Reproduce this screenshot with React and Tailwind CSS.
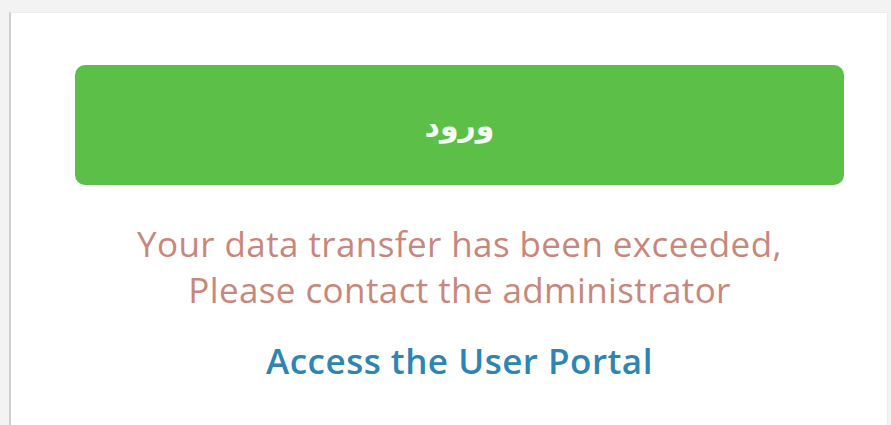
import React from 'react';

const LoginStatus = () => {
  return (
    <div className="min-h-screen bg-[#f3f3f3] pt-[12px] pl-[9px] pr-[3px] overflow-hidden">
      <div className="bg-white min-h-[413px] border-l-2 border-t border-r border-l-[#cfcfcf] border-t-[#ececec] border-r-[#ececec] pl-[64px] pr-[43px] pt-[52px]">
        {/* Sign-in button */}
        <button
          className="w-full h-[120px] rounded-[10px] bg-[#5cbf48] text-[#f4fbf2] text-[30px] font-bold flex items-center justify-center"
          style={{ fontFamily: '"DejaVu Sans", sans-serif' }}
          dir="rtl"
        >
          ورود
        </button>

        {/* Quota message */}
        <div
          className="mt-[36px] text-center text-[35px] leading-[46px] tracking-[0.4px] text-[#c9877b]"
          style={{ fontFamily: '"Open Sans", sans-serif' }}
        >
          <p>Your data transfer has been exceeded,</p>
          <p>Please contact the administrator</p>
        </div>

        <div className="mt-[25px] text-center">
          <a
            href="#"
            className="text-[35px] leading-[46px] tracking-[0.5px] font-semibold text-[#2e85b1]"
            style={{ fontFamily: '"Open Sans", sans-serif' }}
          >
            Access the User Portal
          </a>
        </div>
      </div>
    </div>
  );
};

export default function App() {
  return <LoginStatus />;
}
